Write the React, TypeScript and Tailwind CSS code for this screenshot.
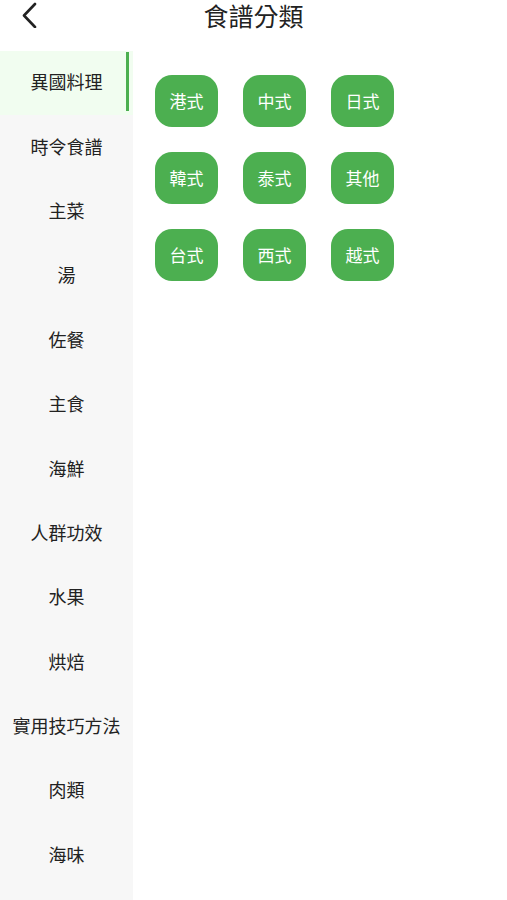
const categories = [
  "異國料理",
  "時令食譜",
  "主菜",
  "湯",
  "佐餐",
  "主食",
  "海鮮",
  "人群功效",
  "水果",
  "烘焙",
  "實用技巧方法",
  "肉類",
  "海味",
]

const styles = ["港式", "中式", "日式", "韓式", "泰式", "其他", "台式", "西式", "越式"]

export default function App() {
  return (
    <div
      className="w-[507px] h-[900px] overflow-hidden bg-white text-[#222]"
      style={{ fontFamily: '"Noto Sans CJK TC", "Noto Sans", sans-serif' }}
    >
      {/* Header */}
      <header className="relative h-[51px] flex items-start justify-center">
        <button className="absolute left-[13px] top-[0px] w-[32px] h-[30px] flex items-center justify-center">
          <svg width="18" height="26" viewBox="0 0 18 26" fill="none">
            <path d="M15 2 L4 13.5 L15 25" stroke="#222" strokeWidth="2.6" strokeLinecap="round" strokeLinejoin="round" />
          </svg>
        </button>
        <h1 className="text-[25px] leading-[30px] text-[#222]">食譜分類</h1>
      </header>

      <div className="flex">
        {/* Sidebar */}
        <aside className="w-[133px] h-[849px] bg-[#f7f7f7] flex flex-col">
          {categories.map((c, i) => (
            <div
              key={c}
              className={
                i === 0
                  ? "relative h-[64.4px] shrink-0 flex items-center justify-center pb-[3px] bg-[#f1fdf0]"
                  : "relative h-[64.4px] shrink-0 flex items-center justify-center pb-[3px]"
              }
            >
              <span className="text-[18px]">{c}</span>
              {i === 0 && <span className="absolute right-[4px] top-[1px] bottom-[4px] w-[3px] bg-[#4caf50]" />}
            </div>
          ))}
        </aside>

        {/* Styles grid */}
        <main className="flex-1 pl-[22px] pt-[24px]">
          <div className="grid grid-cols-[repeat(3,63px)] gap-x-[25px] gap-y-[25px]">
            {styles.map((s) => (
              <button
                key={s}
                className="w-[63px] h-[52px] rounded-[17px] bg-[#4caf50] text-white text-[17px] flex items-center justify-center"
              >
                {s}
              </button>
            ))}
          </div>
        </main>
      </div>
    </div>
  )
}
